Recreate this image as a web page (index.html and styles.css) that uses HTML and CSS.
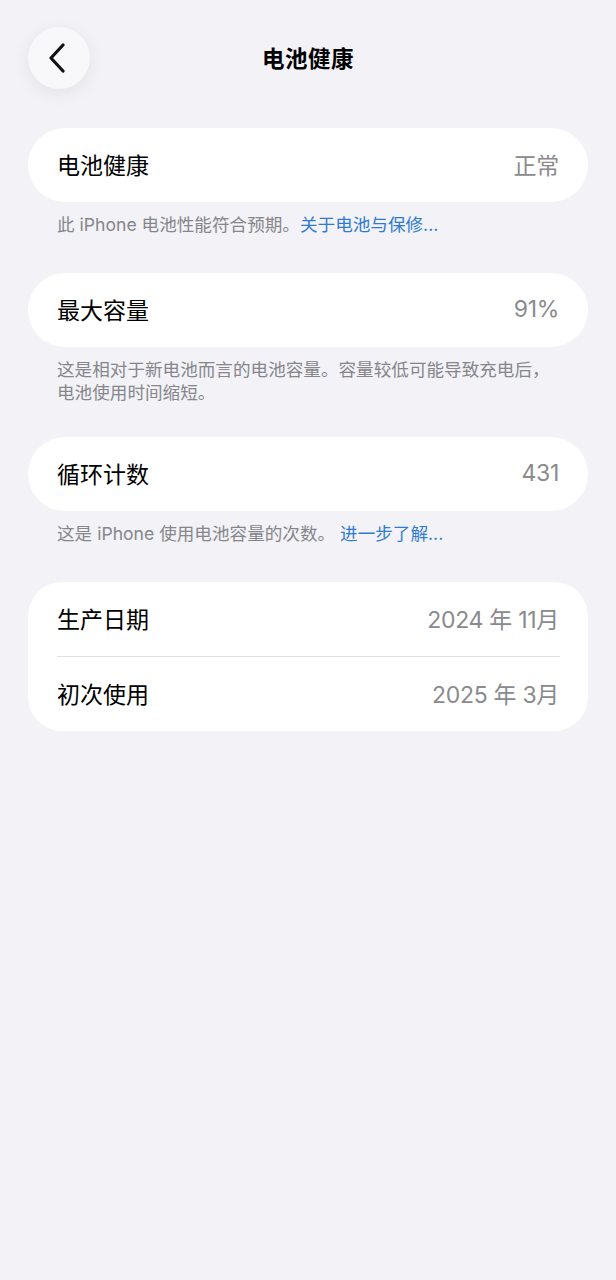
FILE: index.html
```html
<!DOCTYPE html>
<html lang="zh-CN">
<head>
<meta charset="utf-8">
<title>电池健康</title>
<link rel="stylesheet" href="styles.css">
</head>
<body>
<div class="page">
  <header class="nav">
    <button class="back" aria-label="返回">
      <svg width="18" height="30" viewBox="0 0 18 30"><path d="M15 2 L3 15 L15 28" fill="none" stroke="#111" stroke-width="3.2" stroke-linecap="round" stroke-linejoin="round"/></svg>
    </button>
    <h1 class="title">电池健康</h1>
  </header>

  <section class="group group-first">
    <div class="card">
      <div class="row"><span class="label">电池健康</span><span class="value">正常</span></div>
    </div>
    <p class="foot">此 iPhone 电池性能符合预期。<a class="link">关于电池与保修...</a></p>
  </section>

  <section class="group">
    <div class="card">
      <div class="row"><span class="label">最大容量</span><span class="value">91%</span></div>
    </div>
    <p class="foot">这是相对于新电池而言的电池容量。容量较低可能导致充电后，电池使用时间缩短。</p>
  </section>

  <section class="group group-after-long">
    <div class="card">
      <div class="row"><span class="label">循环计数</span><span class="value">431</span></div>
    </div>
    <p class="foot">这是 iPhone 使用电池容量的次数。 <a class="link">进一步了解...</a></p>
  </section>

  <section class="group">
    <div class="card card-multi">
      <div class="row"><span class="label">生产日期</span><span class="value">2024 年 11月</span></div>
      <div class="divider"></div>
      <div class="row"><span class="label">初次使用</span><span class="value">2025 年 3月</span></div>
    </div>
  </section>
</div>
</body>
</html>
```

FILE: styles.css
```css
* { box-sizing: border-box; }
html, body {
  margin: 0;
  padding: 0;
  background: #f2f2f7;
}
body {
  font-family: Inter, "Noto Sans CJK SC", sans-serif;
  color: #000;
  min-height: 1280px;
}
.page {
  padding: 27px 28px 0 28px;
}
.nav {
  position: relative;
  height: 62px;
  display: flex;
  align-items: center;
  justify-content: center;
}
.back {
  position: absolute;
  left: 0;
  top: 0;
  width: 62px;
  height: 62px;
  border-radius: 50%;
  border: none;
  background: #f8f8fa;
  box-shadow: 0 4px 18px rgba(0, 0, 0, 0.07);
  display: flex;
  align-items: center;
  justify-content: center;
  padding: 0 4px 0 0;
}
.title {
  margin: 0 0 3px 0;
  font-size: 22.5px;
  font-weight: 700;
  letter-spacing: 0.5px;
}
.group {
  margin-top: 37px;
}
.group-first {
  margin-top: 39px;
}
.group-after-long {
  margin-top: 33px;
}
.card {
  background: #fff;
  border-radius: 37px;
}
.card-multi {
  border-radius: 34px;
}
.row {
  height: 74px;
  padding: 0 29px 3px 29px;
  display: flex;
  align-items: center;
  justify-content: space-between;
  font-size: 23px;
}
.label {
  color: #000;
}
.value {
  color: #8a8a8e;
  letter-spacing: -0.3px;
}
.divider {
  height: 1px;
  background: #e0e0e5;
  margin: 0 28px 0 29px;
}
.foot {
  margin: 11px 0 0 0;
  padding: 0 29px;
  font-size: 17.6px;
  line-height: 23px;
  color: #86868b;
}
.link {
  color: #2f7bd0;
}
```
